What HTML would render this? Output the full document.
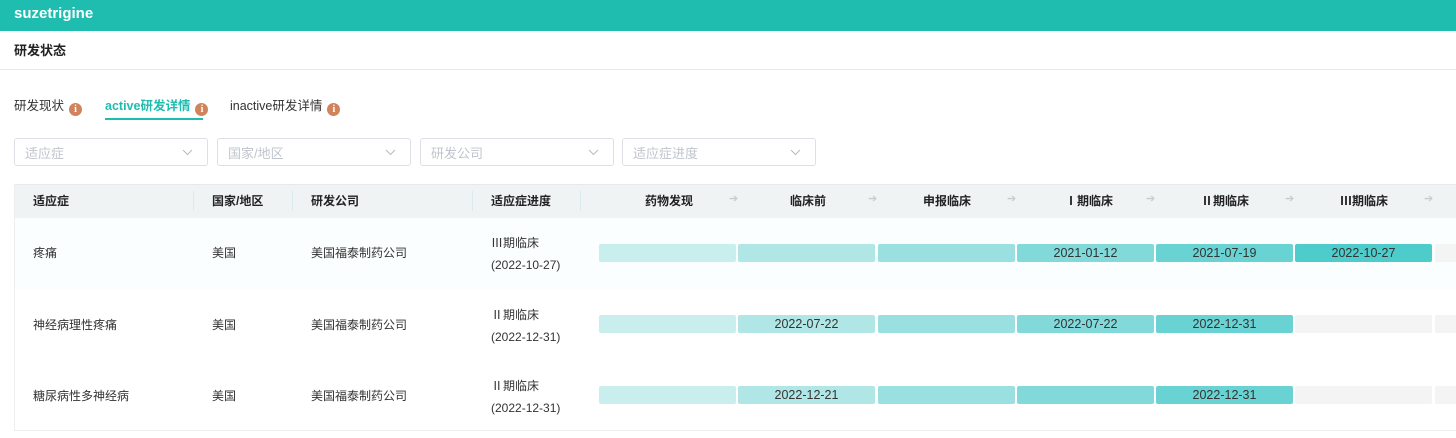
<!DOCTYPE html><html><head><meta charset="utf-8"><style>
*{margin:0;padding:0;box-sizing:border-box}
body{width:1456px;height:438px;overflow:hidden;background:#fff;font-family:"Liberation Sans","Noto Sans CJK SC",sans-serif;font-size:12px;color:#333;position:relative}
.a{position:absolute;white-space:nowrap}
.hdr{left:0;top:0;width:1456px;height:31px;background:#1fbdb0;color:#fff;font-weight:bold;font-size:15px;padding:5px 0 0 14px}
.i{display:inline-block;width:13px;height:13px;border-radius:50%;background:#d0845c;color:#fff;font-size:10px;font-weight:bold;text-align:center;line-height:13px;vertical-align:-2px;margin-left:5px;font-family:"Liberation Serif",serif}
.dd{top:138px;height:28px;width:194px;border:1px solid #dcdfe6;border-radius:3px;color:#c0c4cc;font-size:13px;padding:4px 0 0 10px}
.dd svg{position:absolute;right:14px;top:10px}
.th{top:184px;left:14px;width:1442px;height:34px;background:#eff3f4;border-top:1px solid #e6eaec}
.h{top:192px;font-weight:bold;font-size:12px;color:#222}
.sep{top:191px;width:1px;height:20px;background:#d9ecea}
.bar{height:18px;width:137px;border-radius:2px;text-align:center;font-size:12.5px;line-height:18px;color:#333}
.arr{top:192px;color:#c8cccc;font-size:11px}
</style></head><body>
<div class="a hdr">suzetrigine</div>
<div class="a" style="left:14px;top:40px;font-weight:bold;font-size:13px;color:#222">研发状态</div>
<div class="a" style="left:0;top:69px;width:1456px;height:1px;background:#e8e8e8"></div>
<div class="a" style="left:14px;top:95px;font-size:12.5px">研发现状<span class="i">i</span></div>
<div class="a" style="left:105px;top:95px;font-size:12.5px;color:#1fbdb0;font-weight:bold">active研发详情<span class="i">i</span></div>
<div class="a" style="left:105px;top:118px;width:98px;height:2px;background:#1fbdb0"></div>
<div class="a" style="left:230px;top:95px;font-size:12.5px">inactive研发详情<span class="i">i</span></div>
<div class="a dd" style="left:14px">适应症<svg width="11" height="7"><path d="M1 1l4.5 4.5L10 1" fill="none" stroke="#bbb"/></svg></div>
<div class="a dd" style="left:217px">国家/地区<svg width="11" height="7"><path d="M1 1l4.5 4.5L10 1" fill="none" stroke="#bbb"/></svg></div>
<div class="a dd" style="left:420px">研发公司<svg width="11" height="7"><path d="M1 1l4.5 4.5L10 1" fill="none" stroke="#bbb"/></svg></div>
<div class="a dd" style="left:622px">适应症进度<svg width="11" height="7"><path d="M1 1l4.5 4.5L10 1" fill="none" stroke="#bbb"/></svg></div>
<div class="a th"></div>
<div class="a" style="left:14px;top:218px;width:1442px;height:71px;background:#fbfefe"></div>
<div class="a" style="left:14px;top:184px;width:1px;height:247px;background:#eceff0"></div>
<div class="a" style="left:14px;top:430px;width:1442px;height:1px;background:#eceff0"></div>
<div class="a h" style="left:33px">适应症</div>
<div class="a h" style="left:212px">国家/地区</div>
<div class="a h" style="left:311px">研发公司</div>
<div class="a h" style="left:491px">适应症进度</div>
<div class="a sep" style="left:193px"></div><div class="a sep" style="left:292px"></div><div class="a sep" style="left:472px"></div><div class="a sep" style="left:580px"></div>
<div class="a h" style="left:645px">药物发现</div><div class="a arr" style="left:729px">➔</div>
<div class="a h" style="left:790px">临床前</div><div class="a arr" style="left:868px">➔</div>
<div class="a h" style="left:923px">申报临床</div><div class="a arr" style="left:1007px">➔</div>
<div class="a h" style="left:1065px">Ⅰ期临床</div><div class="a arr" style="left:1146px">➔</div>
<div class="a h" style="left:1201px">Ⅱ期临床</div><div class="a arr" style="left:1285px">➔</div>
<div class="a h" style="left:1340px">Ⅲ期临床</div><div class="a arr" style="left:1424px">➔</div>

<div class="a" style="left:33px;top:244px">疼痛</div>
<div class="a" style="left:212px;top:244px">美国</div>
<div class="a" style="left:311px;top:244px">美国福泰制药公司</div>
<div class="a" style="left:491px;top:232px;line-height:22px">Ⅲ期临床<br>(2022-10-27)</div>
<div class="a" style="left:33px;top:316px">神经病理性疼痛</div>
<div class="a" style="left:212px;top:316px">美国</div>
<div class="a" style="left:311px;top:316px">美国福泰制药公司</div>
<div class="a" style="left:491px;top:304px;line-height:22px">Ⅱ期临床<br>(2022-12-31)</div>
<div class="a" style="left:33px;top:387px">糖尿病性多神经病</div>
<div class="a" style="left:212px;top:387px">美国</div>
<div class="a" style="left:311px;top:387px">美国福泰制药公司</div>
<div class="a" style="left:491px;top:375px;line-height:22px">Ⅱ期临床<br>(2022-12-31)</div>

<div class="a bar" style="left:599px;top:244px;background:#c9eeee"></div>
<div class="a bar" style="left:738px;top:244px;background:#b1e6e6"></div>
<div class="a bar" style="left:878px;top:244px;background:#9be0e0"></div>
<div class="a bar" style="left:1017px;top:244px;background:#82d9d9">2021-01-12</div>
<div class="a bar" style="left:1156px;top:244px;background:#69d3d3">2021-07-19</div>
<div class="a bar" style="left:1295px;top:244px;background:#4ecbcb">2022-10-27</div>
<div class="a bar" style="left:1435px;top:244px;background:#f4f4f4"></div>

<div class="a bar" style="left:599px;top:315px;background:#c9eeee"></div>
<div class="a bar" style="left:738px;top:315px;background:#b1e6e6">2022-07-22</div>
<div class="a bar" style="left:878px;top:315px;background:#9be0e0"></div>
<div class="a bar" style="left:1017px;top:315px;background:#82d9d9">2022-07-22</div>
<div class="a bar" style="left:1156px;top:315px;background:#69d3d3">2022-12-31</div>
<div class="a bar" style="left:1295px;top:315px;background:#f4f4f4"></div>
<div class="a bar" style="left:1435px;top:315px;background:#f4f4f4"></div>

<div class="a bar" style="left:599px;top:386px;background:#c9eeee"></div>
<div class="a bar" style="left:738px;top:386px;background:#b1e6e6">2022-12-21</div>
<div class="a bar" style="left:878px;top:386px;background:#9be0e0"></div>
<div class="a bar" style="left:1017px;top:386px;background:#82d9d9"></div>
<div class="a bar" style="left:1156px;top:386px;background:#69d3d3">2022-12-31</div>
<div class="a bar" style="left:1295px;top:386px;background:#f4f4f4"></div>
<div class="a bar" style="left:1435px;top:386px;background:#f4f4f4"></div>
</body></html>
